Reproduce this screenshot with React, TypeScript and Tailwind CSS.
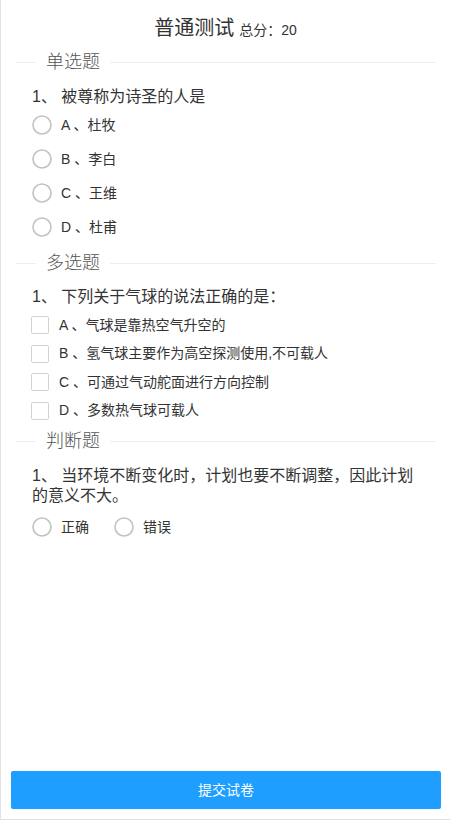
import React from "react";

const FONT = { fontFamily: '"Liberation Sans", "Noto Sans CJK SC", sans-serif' };

function Legend({ title }: { title: string }) {
  return (
    <div className="flex items-center h-[24px] ml-[15px] w-[420px]">
      <div className="h-px w-[20px] bg-[#eeeeee]" />
      <span className="px-[10px] text-[18px] leading-[24px] font-light text-[#555]">{title}</span>
      <div className="h-px flex-1 bg-[#eeeeee]" />
    </div>
  );
}

function Radio({ label }: { label: string }) {
  return (
    <div className="flex items-center h-[34px]">
      <svg width="20" height="20" viewBox="0 0 20 20" className="shrink-0">
        <circle cx="10" cy="10" r="9" fill="none" stroke="#c2c2c2" strokeWidth="1.6" />
      </svg>
      <span className="ml-[9px] text-[14px] text-[#333]">{label}</span>
    </div>
  );
}

function Check({ label }: { label: string }) {
  return (
    <div className="flex items-center h-[28.5px]">
      <div className="w-[18px] h-[18px] border border-[#d2d2d2] rounded-[2px] bg-white shrink-0" />
      <span className="ml-[10px] text-[14px] text-[#333]">{label}</span>
    </div>
  );
}

export default function App() {
  return (
    <div style={FONT} className="w-full h-[820px] border-l border-b border-[#e2e2e2] flex flex-col bg-white text-[#333]">
      <div className="pt-[14px] h-[42px] text-center leading-[28px]">
        <span className="text-[20px] text-[#333]">普通测试</span>
        <span className="text-[14px] text-[#333] ml-[5px]">总分：20</span>
      </div>

      <div className="mt-[8px]">
        <Legend title="单选题" />
      </div>
      <div className="pl-[31px] pr-[29px] mt-[13px] text-[16px] leading-[20px] text-[#333]">1、 被尊称为诗圣的人是</div>
      <div className="pl-[31px] mt-[1px] flex flex-col">
        <Radio label="A 、杜牧" />
        <Radio label="B 、李白" />
        <Radio label="C 、王维" />
        <Radio label="D 、杜甫" />
      </div>

      <div className="mt-[7px]">
        <Legend title="多选题" />
      </div>
      <div className="pl-[31px] pr-[29px] mt-[12px] text-[16px] leading-[20px] text-[#333]">1、 下列关于气球的说法正确的是：</div>
      <div className="pl-[30px] mt-[4px] flex flex-col">
        <Check label="A 、气球是靠热空气升空的" />
        <Check label="B 、氢气球主要作为高空探测使用,不可载人" />
        <Check label="C 、可通过气动舵面进行方向控制" />
        <Check label="D 、多数热气球可载人" />
      </div>

      <div className="mt-[4px]">
        <Legend title="判断题" />
      </div>
      <div className="pl-[31px] pr-[29px] mt-[13px] text-[16px] leading-[20px] text-[#333]">
        1、 当环境不断变化时，计划也要不断调整，因此计划的意义不大。
      </div>
      <div className="pl-[31px] mt-[4px] flex flex-row gap-[25px]">
        <Radio label="正确" />
        <Radio label="错误" />
      </div>

      <div className="mt-auto mb-[10px] ml-[10px] w-[430px] h-[38px] rounded-[2px] bg-[#1e9fff] flex items-center justify-center text-white text-[14px]">
        提交试卷
      </div>
    </div>
  );
}
